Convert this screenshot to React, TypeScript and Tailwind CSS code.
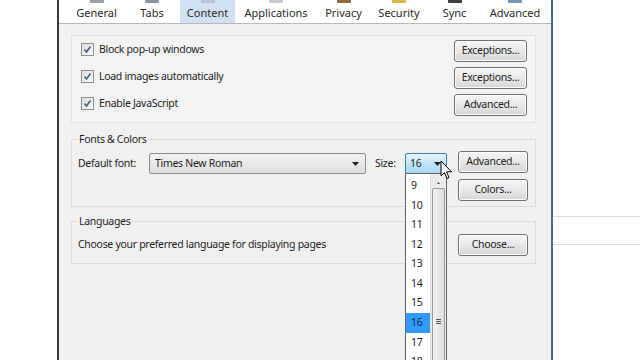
import React from "react";

const font = { fontFamily: '"Noto Sans", "Open Sans", sans-serif' };

const tabs = [
  { label: "General", w: "w-[55px]", icon: "bg-[#9aa0a8]" },
  { label: "Tabs", w: "w-[56px]", icon: "bg-[#8a96a6]" },
  { label: "Content", w: "w-[55px]", icon: "bg-[#b8c4d4]", active: true },
  { label: "Applications", w: "w-[82px]", icon: "bg-[#c8ccd2]" },
  { label: "Privacy", w: "w-[53px]", icon: "bg-[#8c6a3c]" },
  { label: "Security", w: "w-[58px]", icon: "bg-[#d9b54a]" },
  { label: "Sync", w: "w-[53px]", icon: "bg-[#3c3c3c]" },
  { label: "Advanced", w: "w-[68px]", icon: "bg-[#7e98b4]" },
];

function Btn({ children, className = "" }: { children: React.ReactNode; className?: string }) {
  return (
    <div
      className={`h-[22px] rounded-[3px] border border-[#707070] bg-gradient-to-b from-[#f6f6f6] via-[#e8e8e8] to-[#d6d6d6] shadow-[inset_0_0_0_1px_#fcfcfc] flex items-center justify-center text-[#1e1e1e] ${className}`}
    >
      {children}
    </div>
  );
}

function Check({ children }: { children: React.ReactNode }) {
  return (
    <div className="flex items-center gap-[5px] h-[22px] -mt-[3px]">
      <div className="w-[13px] h-[13px] border border-[#8e8f8f] bg-gradient-to-br from-[#dcdcdc] to-[#fbfbfb] flex items-center justify-center">
        <svg width="9" height="9" viewBox="0 0 9 9">
          <path d="M1.5 4.5 L3.5 7 L7.5 1.5" stroke="#4a5a8a" strokeWidth="1.6" fill="none" />
        </svg>
      </div>
      <span>{children}</span>
    </div>
  );
}

const sizes = ["9", "10", "11", "12", "13", "14", "15", "16", "17", "18"];

export default function App() {
  return (
    <div className="relative w-[640px] h-[360px] flex bg-white overflow-hidden text-[10.5px] tracking-[-0.3px] text-[#1e1e1e]" style={font}>
      <div className="w-[57px] shrink-0" />
      <div className="w-[496px] shrink-0 border-l-2 border-l-[#3a3a3a] border-r-2 border-r-[#3f6f8e] flex flex-col bg-[#f0f0f0]">
        {/* toolbar */}
        <div className="h-[24px] bg-white border-b border-[#b9b9b9] flex items-end pl-[10px]">
          {tabs.map((t) => (
            <div
              key={t.label}
              className={`${t.w} h-full flex flex-col items-center justify-between ${t.active ? "bg-[#d2e0f4]" : ""}`}
            >
              <div className={`w-[14px] h-[3px] ${t.icon} rounded-b-[1px]`} />
              <span className="leading-none pb-[5px] text-[#2a2a2a] text-[11px] tracking-normal">{t.label}</span>
            </div>
          ))}
        </div>

        <div className="px-[12px] pt-[11px] pr-[15px] flex flex-col">
          {/* group 1 */}
          <div className="h-[88px] border border-[#e2e2e2] bg-[#f3f3f3] pl-[9px] pr-[8px] pt-[4px] flex flex-col gap-[5px]">
            {[
              ["Block pop-up windows", "Exceptions..."],
              ["Load images automatically", "Exceptions..."],
              ["Enable JavaScript", "Advanced..."],
            ].map(([l, b]) => (
              <div key={l} className="flex items-center justify-between">
                <Check>{l}</Check>
                <Btn className="w-[73px]">{b}</Btn>
              </div>
            ))}
          </div>

          {/* Fonts & Colors */}
          <fieldset className="mt-[9px] h-[75px] border border-[#dcdcdc] pl-[6px] pr-[7px]">
            <legend className="px-[1px] leading-[14px]">Fonts &amp; Colors</legend>
            <div className="flex items-start mt-[6px]">
              <div className="flex items-center h-[21px] mt-[1px]">
                <span className="w-[71px]">Default font:</span>
                <div className="w-[217px] h-[21px] border border-[#8c8c8c] rounded-[2px] bg-gradient-to-b from-[#f2f2f2] to-[#dedede] flex items-center pl-[5px] pr-[6px] justify-between">
                  <span>Times New Roman</span>
                  <svg width="7" height="4" viewBox="0 0 7 4">
                    <path d="M0 0 H7 L3.5 4 Z" fill="#222" />
                  </svg>
                </div>
                <span className="ml-[9px] w-[30px]">Size:</span>
                <div className="relative w-[42px] h-[21px]">
                  <div className="w-full h-full border border-[#3c7fb1] rounded-[2px] bg-gradient-to-b from-[#eaf6fd] via-[#c3e4f8] to-[#a7d9f5] flex items-center pl-[4px] pr-[5px] justify-between">
                    <span>16</span>
                    <svg width="7" height="4" viewBox="0 0 7 4">
                      <path d="M0 0 H7 L3.5 4 Z" fill="#222" />
                    </svg>
                  </div>
                  <div className="absolute left-0 top-[20px] w-[42px] h-[200px] bg-white border border-[#646464] flex z-10">
                    <div className="w-[24px] flex flex-col pt-[2px]">
                      {sizes.map((s) => (
                        <div
                          key={s}
                          className={`h-[19.8px] pl-[5px] flex items-center ${s === "16" ? "bg-[#3399ff] text-[#10294d]" : ""}`}
                        >
                          {s}
                        </div>
                      ))}
                    </div>
                    <div className="flex-1 bg-[#ebebeb] border-l border-[#e0e0e0] flex flex-col items-center">
                      <svg width="7" height="4" viewBox="0 0 7 4" className="mt-[8px]">
                        <path d="M0 4 H7 L3.5 0 Z" fill="#555" />
                      </svg>
                      <div className="mt-[4px] w-[13px] h-[240px] border border-[#9a9a9a] rounded-[2px] bg-gradient-to-r from-[#f4f4f4] to-[#dcdcdc] flex flex-col items-center pt-[130px] gap-[1px]">
                        <div className="w-[5px] h-px bg-[#555]" />
                        <div className="w-[5px] h-px bg-[#555]" />
                        <div className="w-[5px] h-px bg-[#555]" />
                      </div>
                    </div>
                  </div>
                </div>
              </div>
              <div className="ml-auto flex flex-col gap-[6px] -mt-[1px]">
                <Btn className="w-[70px]">Advanced...</Btn>
                <Btn className="w-[70px]">Colors...</Btn>
              </div>
            </div>
          </fieldset>

          {/* Languages */}
          <fieldset className="mt-[7px] h-[50px] border border-[#dcdcdc] pl-[6px] pr-[7px]">
            <legend className="px-[1px] leading-[14px]">Languages</legend>
            <div className="flex items-center justify-between mt-[6px]">
              <span>Choose your preferred language for displaying pages</span>
              <Btn className="w-[70px]">Choose...</Btn>
            </div>
          </fieldset>
        </div>
      </div>
      <div className="flex-1 flex flex-col">
        <div className="h-[216px]" />
        <div className="h-px bg-[#dcdcdc]" />
        <div className="h-[27px]" />
        <div className="h-px bg-[#dcdcdc]" />
      </div>
      {/* cursor */}
      <svg width="13" height="20" viewBox="0 0 13 20" className="absolute left-[440px] top-[160px] z-20">
        <path d="M1 1 L1 16 L4.5 12.5 L7 18.5 L9 17.6 L6.6 11.8 L11.5 11.8 Z" fill="#fff" stroke="#000" strokeWidth="1" />
      </svg>
    </div>
  );
}
